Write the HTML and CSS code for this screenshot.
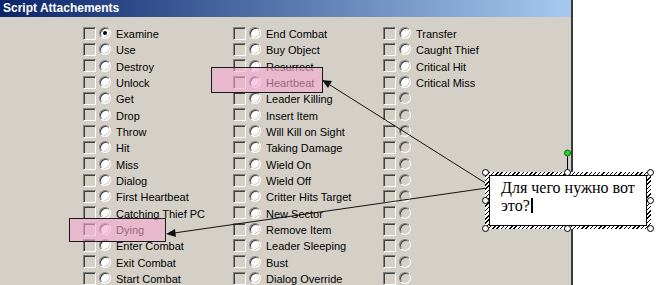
FILE: index.html
```html
<!DOCTYPE html>
<html lang="en">
<head>
    <meta charset="UTF-8">
    <title>Script Attachements</title>
    <link rel="stylesheet" href="styles.css">
</head>
<body>
    <div class="screen">
        <div class="window">
            <div class="caption">Script Attachements</div>
            <div class="events">
                <div class="ev"><span class="chk"></span><span class="rad on"></span><span class="lbl">Examine</span></div>
                <div class="ev"><span class="chk"></span><span class="rad"></span><span class="lbl">Use</span></div>
                <div class="ev"><span class="chk"></span><span class="rad"></span><span class="lbl">Destroy</span></div>
                <div class="ev"><span class="chk"></span><span class="rad"></span><span class="lbl">Unlock</span></div>
                <div class="ev"><span class="chk"></span><span class="rad"></span><span class="lbl">Get</span></div>
                <div class="ev"><span class="chk"></span><span class="rad"></span><span class="lbl">Drop</span></div>
                <div class="ev"><span class="chk"></span><span class="rad"></span><span class="lbl">Throw</span></div>
                <div class="ev"><span class="chk"></span><span class="rad"></span><span class="lbl">Hit</span></div>
                <div class="ev"><span class="chk"></span><span class="rad"></span><span class="lbl">Miss</span></div>
                <div class="ev"><span class="chk"></span><span class="rad"></span><span class="lbl">Dialog</span></div>
                <div class="ev"><span class="chk"></span><span class="rad"></span><span class="lbl">First Heartbeat</span></div>
                <div class="ev"><span class="chk"></span><span class="rad"></span><span class="lbl">Catching Thief PC</span></div>
                <div class="ev"><span class="chk"></span><span class="rad"></span><span class="lbl">Dying</span></div>
                <div class="ev"><span class="chk"></span><span class="rad"></span><span class="lbl">Enter Combat</span></div>
                <div class="ev"><span class="chk"></span><span class="rad"></span><span class="lbl">Exit Combat</span></div>
                <div class="ev"><span class="chk"></span><span class="rad"></span><span class="lbl">Start Combat</span></div>

                <div class="ev"><span class="chk"></span><span class="rad"></span><span class="lbl">End Combat</span></div>
                <div class="ev"><span class="chk"></span><span class="rad"></span><span class="lbl">Buy Object</span></div>
                <div class="ev"><span class="chk"></span><span class="rad"></span><span class="lbl">Resurrect</span></div>
                <div class="ev"><span class="chk"></span><span class="rad"></span><span class="lbl">Heartbeat</span></div>
                <div class="ev"><span class="chk"></span><span class="rad"></span><span class="lbl">Leader Killing</span></div>
                <div class="ev"><span class="chk"></span><span class="rad"></span><span class="lbl">Insert Item</span></div>
                <div class="ev"><span class="chk"></span><span class="rad"></span><span class="lbl">Will Kill on Sight</span></div>
                <div class="ev"><span class="chk"></span><span class="rad"></span><span class="lbl">Taking Damage</span></div>
                <div class="ev"><span class="chk"></span><span class="rad"></span><span class="lbl">Wield On</span></div>
                <div class="ev"><span class="chk"></span><span class="rad"></span><span class="lbl">Wield Off</span></div>
                <div class="ev"><span class="chk"></span><span class="rad"></span><span class="lbl">Critter Hits Target</span></div>
                <div class="ev"><span class="chk"></span><span class="rad"></span><span class="lbl">New Sector</span></div>
                <div class="ev"><span class="chk"></span><span class="rad"></span><span class="lbl">Remove Item</span></div>
                <div class="ev"><span class="chk"></span><span class="rad"></span><span class="lbl">Leader Sleeping</span></div>
                <div class="ev"><span class="chk"></span><span class="rad"></span><span class="lbl">Bust</span></div>
                <div class="ev"><span class="chk"></span><span class="rad"></span><span class="lbl">Dialog Override</span></div>

                <div class="ev"><span class="chk"></span><span class="rad"></span><span class="lbl">Transfer</span></div>
                <div class="ev"><span class="chk"></span><span class="rad"></span><span class="lbl">Caught Thief</span></div>
                <div class="ev"><span class="chk"></span><span class="rad"></span><span class="lbl">Critical Hit</span></div>
                <div class="ev"><span class="chk"></span><span class="rad"></span><span class="lbl">Critical Miss</span></div>
                <div class="ev"><span class="chk"></span><span class="rad off"></span></div>
                <div class="ev"><span class="chk"></span><span class="rad off"></span></div>
                <div class="ev"><span class="chk"></span><span class="rad off"></span></div>
                <div class="ev"><span class="chk"></span><span class="rad off"></span></div>
                <div class="ev"><span class="chk"></span><span class="rad off"></span></div>
                <div class="ev"><span class="chk"></span><span class="rad off"></span></div>
                <div class="ev"><span class="chk"></span><span class="rad off"></span></div>
                <div class="ev"><span class="chk"></span><span class="rad off"></span></div>
                <div class="ev"><span class="chk"></span><span class="rad off"></span></div>
                <div class="ev"><span class="chk"></span><span class="rad off"></span></div>
                <div class="ev"><span class="chk"></span><span class="rad off"></span></div>
                <div class="ev"><span class="chk"></span><span class="rad off"></span></div>
            </div>
        </div>

        <!-- annotation layer drawn over the screenshot -->
        <div class="mark mark-heartbeat"></div>
        <div class="mark mark-dying"></div>
        <svg class="arrows" width="656" height="285" viewBox="0 0 656 285">
            <line x1="487" y1="184" x2="330" y2="85" stroke="#111" stroke-width="1"/>
            <polygon points="322,80 332,81 328,88" fill="#111"/>
            <line x1="487" y1="188" x2="174" y2="233" stroke="#111" stroke-width="1"/>
            <polygon points="166,234 175,229 176,237" fill="#111"/>
            <line x1="567.5" y1="156" x2="567.5" y2="172" stroke="#000" stroke-width="1"/>
            <circle cx="567.5" cy="153" r="3" fill="#22dd22" stroke="#106010" stroke-width="1"/>
        </svg>
        <div class="note">
            <div class="note-body">Для чего нужно вот это?<span class="caret"></span></div>
            <span class="grip g-tl"></span>
            <span class="grip g-tc"></span>
            <span class="grip g-tr"></span>
            <span class="grip g-ml"></span>
            <span class="grip g-mr"></span>
            <span class="grip g-bl"></span>
            <span class="grip g-bc"></span>
            <span class="grip g-br"></span>
        </div>
    </div>
</body>
</html>
```

FILE: styles.css
```css
body {
    margin: 0;
    background: #fff;
    overflow: hidden;
}
.screen {
    position: relative;
    width: 656px;
    height: 285px;
}
.window {
    width: 571px;
    height: 285px;
    background: #d4d0c8;
    border-right: 2px solid #3a3a36;
    font-family: "Liberation Sans", Arial, sans-serif;
    font-size: 11px;
    color: #000;
}
.caption {
    height: 17px;
    line-height: 17px;
    padding-left: 3px;
    background: linear-gradient(to right, #0a246a, #a6caf0);
    color: #fff;
    font-weight: bold;
    font-size: 12px;
}
.events {
    display: grid;
    grid-template-columns: repeat(3, 150px);
    grid-template-rows: repeat(16, 16.33px);
    grid-auto-flow: column;
    padding: 8px 0 0 83px;
}
.ev {
    display: flex;
    align-items: center;
}
.chk {
    box-sizing: border-box;
    width: 13px;
    height: 13px;
    margin-right: 3px;
    border: 1px solid;
    border-color: #808080 #fff #fff #808080;
    box-shadow: inset 1px 1px #404040, inset -1px -1px #d4d0c8;
    background: #d4d0c8;
}
.rad {
    box-sizing: border-box;
    position: relative;
    width: 12px;
    height: 12px;
    margin-right: 5px;
    border-radius: 50%;
    border: 1px solid;
    border-color: #808080 #fff #fff #808080;
    box-shadow: inset 1px 1px #404040, inset -1px -1px #d4d0c8;
    background: #fff;
}
.rad.off {
    background: #d4d0c8;
}
.rad.on::after {
    content: "";
    position: absolute;
    left: 3px;
    top: 3px;
    width: 4px;
    height: 4px;
    border-radius: 50%;
    background: #000;
}
.lbl {
    margin-top: 2px;
    white-space: nowrap;
}
.mark {
    position: absolute;
    box-sizing: border-box;
    border: 1px solid #1a1a1a;
    background: rgba(245, 168, 207, 0.6);
}
.mark-heartbeat {
    left: 211px;
    top: 67px;
    width: 112px;
    height: 26px;
}
.mark-dying {
    left: 69px;
    top: 218px;
    width: 97px;
    height: 24px;
}
.arrows {
    position: absolute;
    left: 0;
    top: 0;
}
.note {
    position: absolute;
    left: 485px;
    top: 172px;
    width: 166px;
    height: 57px;
    box-sizing: border-box;
    padding: 3px 4px;
    background: repeating-linear-gradient(135deg, #000 0 1px, #fff 1px 3px);
}
.note-body {
    box-sizing: border-box;
    height: 100%;
    padding: 3px 0 0 11px;
    background: #fff;
    border: 1px solid #000;
    font-family: "Liberation Serif", "Times New Roman", serif;
    font-size: 16px;
    line-height: 18px;
    color: #000;
}
.caret {
    display: inline-block;
    width: 2px;
    height: 15px;
    margin-left: 1px;
    vertical-align: -2px;
    background: #000;
}
.grip {
    position: absolute;
    width: 7px;
    height: 7px;
    box-sizing: border-box;
    border: 1px solid #000;
    border-radius: 50%;
    background: #fff;
    margin: -3px 0 0 -3px;
}
.g-tl { left: 0; top: 0; }
.g-tc { left: 82px; top: 0; }
.g-tr { left: 165px; top: 0; }
.g-ml { left: 0; top: 28px; }
.g-mr { left: 165px; top: 28px; }
.g-bl { left: 0; top: 56px; }
.g-bc { left: 82px; top: 56px; }
.g-br { left: 165px; top: 56px; }
```
